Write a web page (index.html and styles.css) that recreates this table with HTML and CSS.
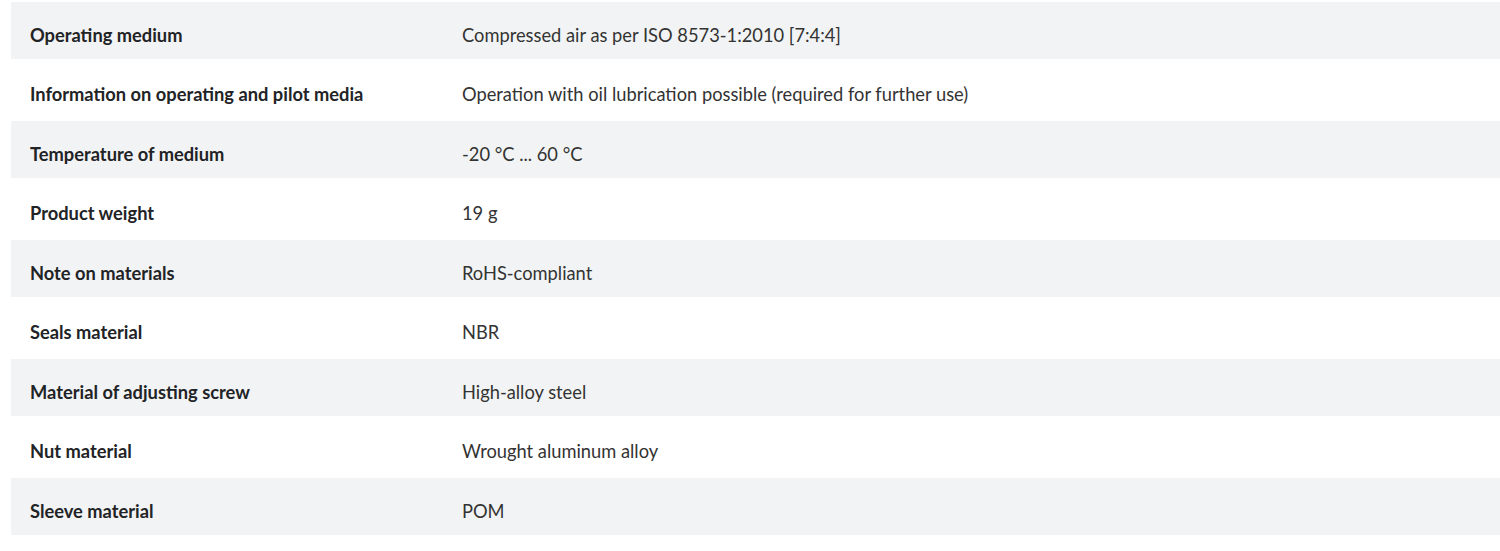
FILE: index.html
```html
<!DOCTYPE html>
<html lang="en">
<head>
<meta charset="utf-8">
<title>Technical data</title>
<link rel="stylesheet" href="styles.css">
</head>
<body>
<div class="specs">
  <div class="row shade"><div class="label">Operating medium</div><div class="value">Compressed air as per ISO 8573-1:2010 [7:4:4]</div></div>
  <div class="row"><div class="label">Information on operating and pilot media</div><div class="value">Operation with oil lubrication possible (required for further use)</div></div>
  <div class="row shade"><div class="label">Temperature of medium</div><div class="value">-20 °C ... 60 °C</div></div>
  <div class="row"><div class="label">Product weight</div><div class="value">19 g</div></div>
  <div class="row shade"><div class="label">Note on materials</div><div class="value">RoHS-compliant</div></div>
  <div class="row"><div class="label">Seals material</div><div class="value">NBR</div></div>
  <div class="row shade"><div class="label">Material of adjusting screw</div><div class="value">High-alloy steel</div></div>
  <div class="row"><div class="label">Nut material</div><div class="value">Wrought aluminum alloy</div></div>
  <div class="row shade"><div class="label">Sleeve material</div><div class="value">POM</div></div>
</div>
</body>
</html>
```
FILE: styles.css
```css
html, body {
  margin: 0;
  padding: 0;
  background: #ffffff;
}
body {
  font-family: Lato, "Liberation Sans", sans-serif;
  font-size: 18.3px;
  color: #333333;
}
.specs {
  display: flex;
  flex-direction: column;
  margin: 2px 0 0 11px;
}
.row {
  display: grid;
  grid-template-columns: 432px 1fr;
  box-sizing: border-box;
  height: 62px;
  padding: 23px 0 0 19px;
  line-height: 24px;
}
.row.shade {
  height: 57px;
  padding-top: 21px;
  background: #f2f3f4;
}
.label {
  font-weight: 700;
  color: #222326;
}
.value {
  color: #333333;
}
```
